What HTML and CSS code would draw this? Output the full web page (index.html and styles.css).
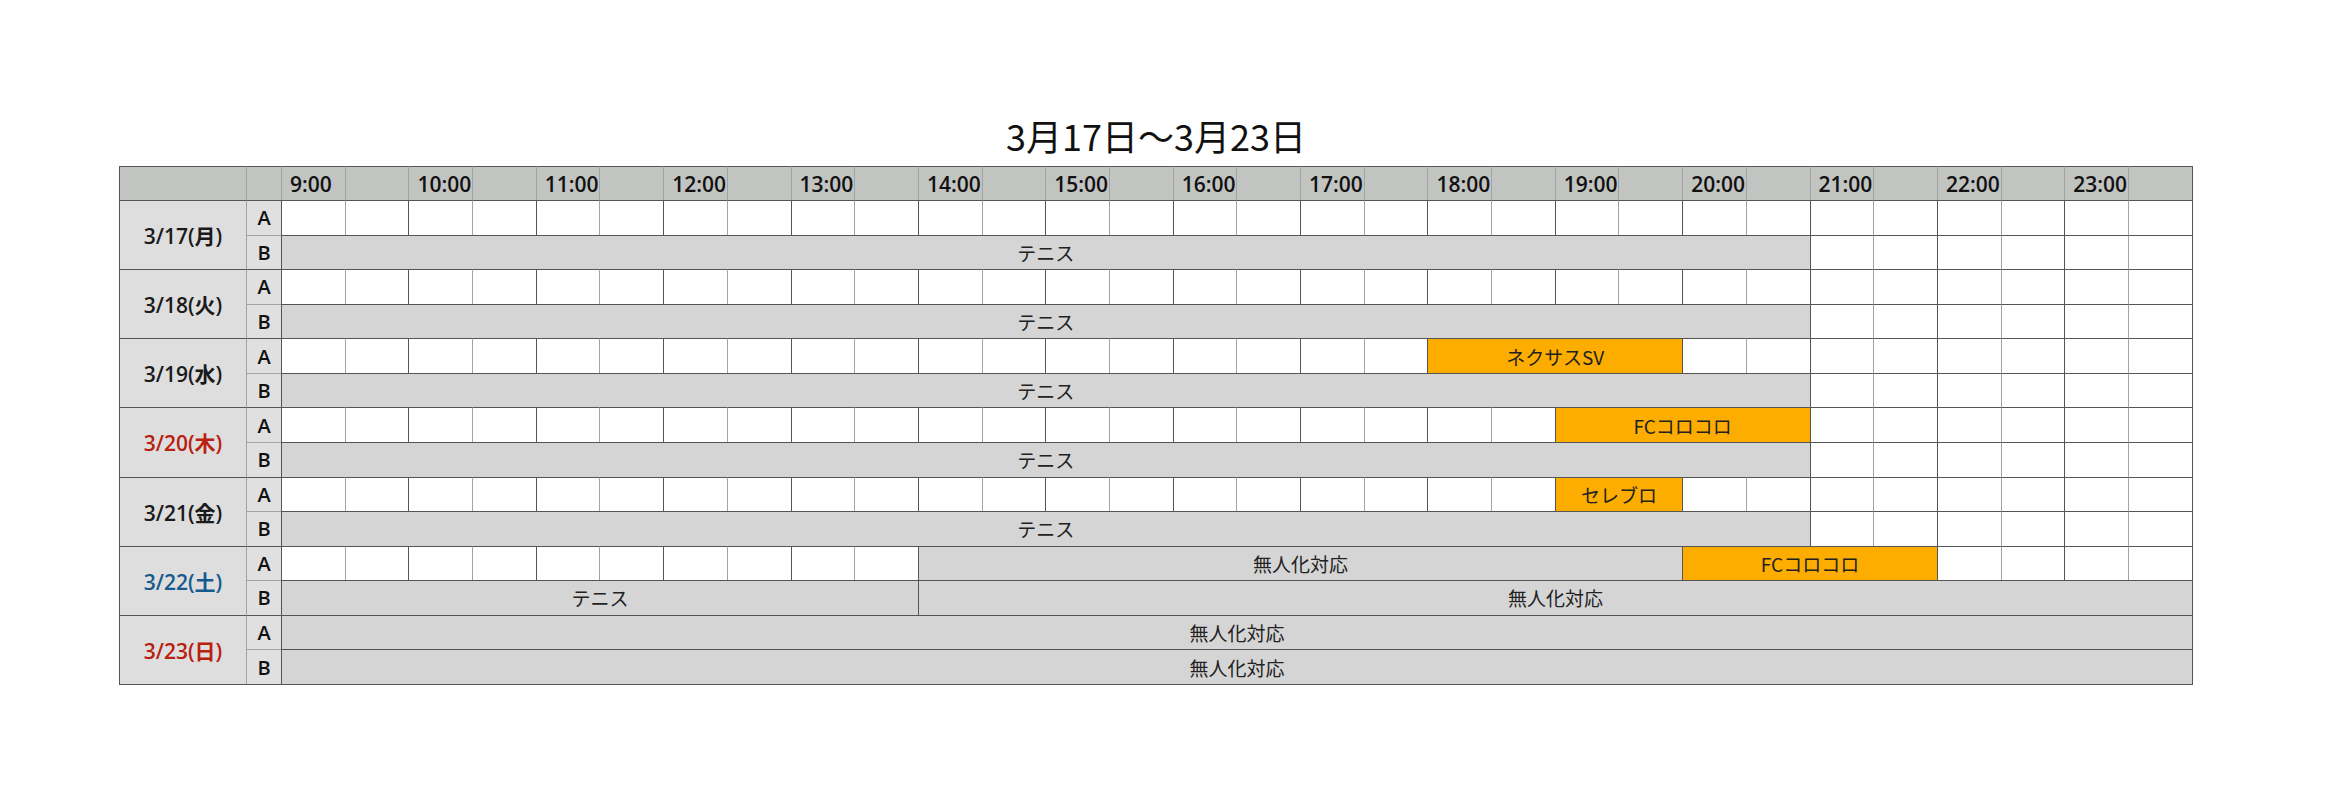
FILE: index.html
```html
<!DOCTYPE html>
<html lang="ja">
<head>
  <meta charset="UTF-8" />
  <title>3月17日～3月23日</title>
  <link rel="stylesheet" href="styles.css">
</head>
<body>
  <div class="hoja">
    <h1>3月17日～3月23日</h1>
    <table class="horario">
      <colgroup>
        <col class="col-fecha">
        <col class="col-pista">
      </colgroup>
      <thead>
        <tr id="cabecera">
          <th class="esquina"></th>
          <th class="esquina"></th>
        </tr>
      </thead>
      <tbody id="cuerpo">
        <!-- filas insertadas con JS -->
      </tbody>
    </table>
  </div>

  <script>
    // cada tramo: [inicio (medias horas desde 9:00), duración, texto, color]
    const tenis = [[0, 24, "テニス"]];
    const dias = [
      { fecha: "3/17(月)", a: [], b: tenis },
      { fecha: "3/18(火)", a: [], b: tenis },
      { fecha: "3/19(水)", a: [[18, 4, "ネクサスSV", "naranja"]], b: tenis },
      { fecha: "3/20(木)", color: "rojo", a: [[20, 4, "FCコロコロ", "naranja"]], b: tenis },
      { fecha: "3/21(金)", a: [[20, 2, "セレブロ", "naranja"]], b: tenis },
      { fecha: "3/22(土)", color: "azul", a: [[10, 12, "無人化対応"], [22, 4, "FCコロコロ", "naranja"]], b: [[0, 10, "テニス"], [10, 20, "無人化対応"]] },
      { fecha: "3/23(日)", color: "rojo", a: [[0, 30, "無人化対応"]], b: [[0, 30, "無人化対応"]] }
    ];

    let colgroup = document.querySelector('colgroup');
    let cabecera = document.getElementById('cabecera');
    for (let i = 0; i < 30; i++) {
      colgroup.appendChild(document.createElement('col'));
      let th = document.createElement('th');
      th.className = "hora-cab";
      if (i % 2 === 0) th.innerText = (9 + i / 2) + ":00";
      cabecera.appendChild(th);
    }

    function crearFila(dia, pista, tramos) {
      let tr = document.createElement('tr');
      tr.className = "fila-" + pista.toLowerCase();
      if (pista === "A") {
        let td = document.createElement('td');
        td.rowSpan = 2;
        td.className = "fecha " + (dia.color || "");
        td.innerText = dia.fecha;
        tr.appendChild(td);
      }
      let p = document.createElement('td');
      p.className = "pista";
      p.innerText = pista;
      tr.appendChild(p);

      let i = 0;
      while (i < 30) {
        let tramo = tramos.find(t => t[0] === i);
        let td = document.createElement('td');
        if (tramo) {
          td.colSpan = tramo[1];
          td.className = "evento " + (tramo[3] || "gris");
          td.innerText = tramo[2];
          i += tramo[1];
        } else {
          td.className = i % 2 === 0 ? "libre" : "libre media";
          i++;
        }
        tr.appendChild(td);
      }
      return tr;
    }

    let cuerpo = document.getElementById('cuerpo');
    dias.forEach(dia => {
      cuerpo.appendChild(crearFila(dia, "A", dia.a));
      cuerpo.appendChild(crearFila(dia, "B", dia.b));
    });
  </script>
</body>
</html>
```

FILE: styles.css
```css
body {
  margin: 0;
  background: #fff;
  font-family: "Noto Sans CJK JP", sans-serif;
  color: #111;
}
.hoja {
  width: 2074px;
  margin-left: 119px;
  padding-top: 112px;
}
h1 {
  margin: 0 0 8px;
  text-align: center;
  font-size: 36px;
  font-weight: 400;
  line-height: 46px;
}
.horario {
  width: 2074px;
  table-layout: fixed;
  border-collapse: separate;
  border-spacing: 0;
  border-right: 1px solid #555;
  border-bottom: 1px solid #555;
}
.col-fecha {
  width: 127px;
}
.col-pista {
  width: 35px;
}
.horario th,
.horario td {
  box-sizing: border-box;
  padding: 0;
  border-top: 1px solid #555;
  border-left: 1px solid #555;
  white-space: nowrap;
  overflow: hidden;
}
.horario thead tr {
  height: 34px;
}
.horario tbody tr {
  height: 34.57px;
}
.horario th {
  background: #c2c4c2;
  border-left-color: #a3a3a3;
  text-align: left;
}
.horario th:first-child {
  border-left-color: #555;
}
.horario .hora-cab {
  padding-left: 8px;
  font-family: "Open Sans", "Noto Sans CJK JP", sans-serif;
  font-size: 21px;
  font-weight: 600;
  color: #111;
}
.fecha {
  background: #dedede;
  text-align: center;
  font-family: "Open Sans", "Noto Sans CJK JP", sans-serif;
  font-size: 21px;
  font-weight: 600;
  color: #1a1a1a;
}
.fecha.rojo {
  color: #b9200f;
}
.fecha.azul {
  color: #165b8d;
}
.pista {
  background: #e0e0e0;
  border-left-color: #a3a3a3 !important;
  text-align: center;
  font-family: "Open Sans", sans-serif;
  font-size: 20px;
  font-weight: 600;
  color: #111;
}
.fila-b .pista {
  border-top-color: #a3a3a3;
}
.libre {
  background: #fff;
}
.libre.media {
  border-left-color: #a3a3a3;
}
.evento {
  text-align: center;
  font-size: 19px;
  color: #222;
}
.evento.gris {
  background: #d5d5d5;
}
.evento.naranja {
  background: #fdad00;
}
```
